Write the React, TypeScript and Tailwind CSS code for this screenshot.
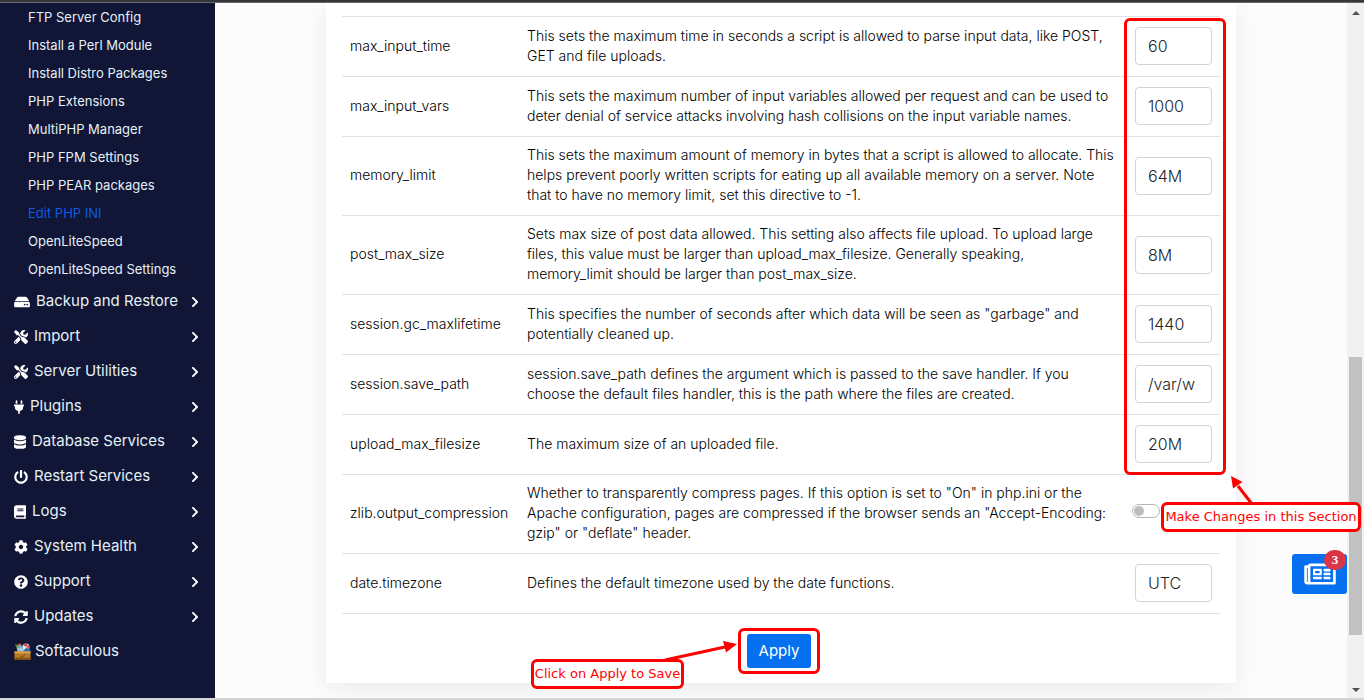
import type { ComponentType } from "react";
import {
  FaBook,
  FaChevronRight,
  FaCog,
  FaDatabase,
  FaHdd,
  FaPlug,
  FaPowerOff,
  FaQuestionCircle,
  FaRegNewspaper,
  FaSyncAlt,
  FaTools,
} from "react-icons/fa";

const SoftaculousIcon = ({ className }: { className?: string }) => (
  <svg viewBox="0 0 18 18" className={className}>
    {/* Toys sticking out of the crate */}
    <path d="M1 1 L4 2 L7 1 L6 5 L3 6 Z" fill="#4d8f3a" />
    <path d="M4 1 L7 0.5 L8 4 L5 4 Z" fill="#d9622b" />
    <circle cx="7" cy="6.5" r="4" fill="#6aa5c4" />
    <path d="M4 5 L6 9 L7 5 L9 9 L10 5" fill="none" stroke="#dcebf2" strokeWidth="0.9" />
    <circle cx="12.8" cy="4.2" r="3.6" fill="#e8e3e4" />
    <path d="M10 2.5 Q12 0 14 1 L13 4 Z" fill="#c9343c" />
    <path d="M14.5 1.5 Q17 3 16.5 6 L13 4.5 Z" fill="#d4545a" />
    <path d="M10 9.5 Q11 4.5 15 5.5 Q18 7 17.5 9.5 Z" fill="#2d6fb3" />
    {/* Crate */}
    <rect x="0.5" y="9" width="17" height="8.5" fill="#b97a22" />
    <rect x="0.5" y="9" width="17" height="2" fill="#e0a64a" />
    <rect x="0.5" y="15.5" width="17" height="2" fill="#8a5512" />
    <path d="M6 16 L8.5 14 L9.5 14.5 L11.5 11.5" fill="none" stroke="#5d5238" strokeWidth="1" />
  </svg>
);

const subLinks = [
  "FTP Server Config",
  "Install a Perl Module",
  "Install Distro Packages",
  "PHP Extensions",
  "MultiPHP Manager",
  "PHP FPM Settings",
  "PHP PEAR packages",
  "Edit PHP INI",
  "OpenLiteSpeed",
  "OpenLiteSpeed Settings",
];

const menu: { label: string; icon: ComponentType<{ className?: string }>; width: string }[] = [
  { label: "Backup and Restore", icon: FaHdd, width: "w-4" },
  { label: "Import", icon: FaTools, width: "w-3.5" },
  { label: "Server Utilities", icon: FaTools, width: "w-3.5" },
  { label: "Plugins", icon: FaPlug, width: "w-2.5" },
  { label: "Database Services", icon: FaDatabase, width: "w-3" },
  { label: "Restart Services", icon: FaPowerOff, width: "w-3.5" },
  { label: "Logs", icon: FaBook, width: "w-3" },
  { label: "System Health", icon: FaCog, width: "w-3.5" },
  { label: "Support", icon: FaQuestionCircle, width: "w-3.5" },
  { label: "Updates", icon: FaSyncAlt, width: "w-3.5" },
];

const settings: { name: string; desc: string; value?: string }[] = [
  {
    name: "max_input_time",
    desc: "This sets the maximum time in seconds a script is allowed to parse input data, like POST, GET and file uploads.",
    value: "60",
  },
  {
    name: "max_input_vars",
    desc: "This sets the maximum number of input variables allowed per request and can be used to deter denial of service attacks involving hash collisions on the input variable names.",
    value: "1000",
  },
  {
    name: "memory_limit",
    desc: "This sets the maximum amount of memory in bytes that a script is allowed to allocate. This helps prevent poorly written scripts for eating up all available memory on a server. Note that to have no memory limit, set this directive to -1.",
    value: "64M",
  },
  {
    name: "post_max_size",
    desc: "Sets max size of post data allowed. This setting also affects file upload. To upload large files, this value must be larger than upload_max_filesize. Generally speaking,\nmemory_limit should be larger than post_max_size.",
    value: "8M",
  },
  {
    name: "session.gc_maxlifetime",
    desc: 'This specifies the number of seconds after which data will be seen as "garbage" and potentially cleaned up.',
    value: "1440",
  },
  {
    name: "session.save_path",
    desc: "session.save_path defines the argument which is passed to the save handler. If you choose the default files handler, this is the path where the files are created.",
    value: "/var/w",
  },
  {
    name: "upload_max_filesize",
    desc: "The maximum size of an uploaded file.",
    value: "20M",
  },
  {
    name: "zlib.output_compression",
    desc: 'Whether to transparently compress pages. If this option is set to "On" in php.ini or the Apache configuration, pages are compressed if the browser sends an "Accept-Encoding: gzip" or "deflate" header.',
  },
  {
    name: "date.timezone",
    desc: "Defines the default timezone used by the date functions.",
    value: "UTC",
  },
];

const Sidebar = () => (
  <nav className="w-[215px] shrink-0 bg-[#111536] pt-px text-[#e4f1f7]">
    <ul>
      {subLinks.map((label) => (
        <li key={label}>
          <a
            href="#"
            className={`flex h-7 items-center pl-7 text-[13px] ${label === "Edit PHP INI" ? "text-[#0d5be0]" : ""}`}
          >
            {label}
          </a>
        </li>
      ))}
    </ul>
    <ul>
      {menu.map((item) => (
        <li key={item.label}>
          <a href="#" className="flex h-[35px] items-center gap-1.5 pr-4 pl-3.5 text-[15px]">
            <item.icon className={`h-3.5 shrink-0 text-white ${item.width}`} />
            <span className="flex-1">{item.label}</span>
            <FaChevronRight className="h-3 w-2 text-white" />
          </a>
        </li>
      ))}
      <li>
        <a href="#" className="flex h-[35px] items-center gap-1 pl-3.5 text-[15px]">
          <SoftaculousIcon className="size-[17px]" />
          Softaculous
        </a>
      </li>
    </ul>
  </nav>
);

const SettingsTable = () => (
  <table className="w-full table-fixed border-separate border-spacing-0 border-t border-[#dee2e6] text-sm leading-5 font-light text-black">
    <colgroup>
      <col className="w-[177px]" />
      <col />
      <col className="w-[93px]" />
    </colgroup>
    <tbody>
      {settings.map((s) => (
        <tr key={s.name}>
          <td className="h-[60px] border-b border-[#dee2e6] pb-0.5 pl-2 whitespace-nowrap">
            <label htmlFor={s.name}>{s.name}</label>
          </td>
          <td className="border-b border-[#dee2e6] px-2 pt-2 pb-2.5 whitespace-pre-line">{s.desc}</td>
          <td className="border-b border-[#dee2e6] pb-px">
            {s.value ? (
              <input
                id={s.name}
                type="text"
                defaultValue={s.value}
                className="mx-2 block h-[38px] w-[77px] rounded border border-[#ced4da] bg-white px-3 text-base text-[#212529]"
              />
            ) : (
              <input
                id={s.name}
                type="checkbox"
                className="mb-1.5 ml-[5px] flex h-3.5 w-7 appearance-none items-center rounded-full border border-[#b5b5b5] bg-white pl-px before:size-2.5 before:rounded-full before:bg-[#bdbdbd]"
              />
            )}
          </td>
        </tr>
      ))}
    </tbody>
  </table>
);

const Note = ({ text, className }: { text: string; className: string }) => (
  <div
    className={`absolute flex h-[30px] items-center justify-center rounded-md border-3 border-[#ff0000] bg-white font-['DejaVu_Sans',sans-serif] text-[13px] whitespace-nowrap text-[#ff0000] ${className}`}
  >
    {text}
  </div>
);

const Scrollbar = () => (
  <div className="flex w-[17px] shrink-0 flex-col items-center bg-[#f1f1f1] py-1.5">
    <svg viewBox="0 0 8 4" className="mt-0.5 w-2">
      <path d="M0 4 L4 0 L8 4 Z" fill="#505050" />
    </svg>
    <div className="mt-[342px] h-[278px] w-[13px] bg-[#c1c1c1]" />
    <svg viewBox="0 0 8 4" className="mt-auto w-2">
      <path d="M0 0 L4 4 L8 0 Z" fill="#505050" />
    </svg>
  </div>
);

export default function App() {
  return (
    <div className="flex min-h-screen flex-col overflow-hidden bg-[#fcfcfc] font-['Inter',sans-serif]">
      <div className="h-[3px] border-b border-[#69696b] bg-[#35363a]" />

      <div className="relative flex flex-1 overflow-hidden">
        <Sidebar />

        <main className="min-w-0 flex-1 px-[111px] pb-[15px]">
          <div className="relative bg-white px-4 pt-[13px] pb-[15px] shadow-[0_6px_24px_rgba(0,0,0,0.07)]">
            <SettingsTable />

            <div className="flex justify-center pt-5 pr-1">
              <div className="relative">
                <button type="button" className="block h-[34px] w-16 rounded-[3px] bg-[#0670f0] text-[15px] text-white">
                  Apply
                </button>
                <div className="pointer-events-none absolute -inset-x-[9px] -inset-y-1.5 rounded-md border-3 border-[#ff0000]" />
                <svg viewBox="0 0 75 24" className="absolute top-1 right-[73px] w-[75px]">
                  <path d="M2 22 L62 9" stroke="#ff0000" strokeWidth="3" />
                  <path d="M60 3 L74 6 L63 14.5 Z" fill="#ff0000" />
                </svg>
                <Note text="Click on Apply to Save" className="top-[25px] right-[127px] w-[153px]" />
              </div>
            </div>

            {/* Callout over the value column */}
            <div className="pointer-events-none absolute top-[15px] right-[10px] h-[457px] w-[102px] rounded-md border-3 border-[#ff0000]" />
            <svg viewBox="0 0 24 30" className="absolute top-[472px] -right-[18px] z-10 w-6">
              <path d="M22 29 L8 11" stroke="#ff0000" strokeWidth="3" />
              <path d="M1 1 L12.5 7 L3 13.5 Z" fill="#ff0000" />
            </svg>
            <Note text="Make Changes in this Section" className="top-[499px] -right-[125px] z-10 w-[200px]" />
          </div>
        </main>

        <Scrollbar />

        <button
          type="button"
          aria-label="News"
          className="absolute top-[551px] right-[17px] flex h-10 w-[55px] items-center justify-center rounded-[3px] bg-[#0670f0] text-white"
        >
          <FaRegNewspaper className="h-7 w-8" />
          <span className="absolute -top-1 right-px flex h-5 w-[22px] items-center justify-center rounded-full bg-[#dc3545] font-['Liberation_Serif',serif] text-[13px] font-bold">
            3
          </span>
        </button>
      </div>

      <div className="h-0.5 bg-[#d4d4d4]" />
    </div>
  );
}
